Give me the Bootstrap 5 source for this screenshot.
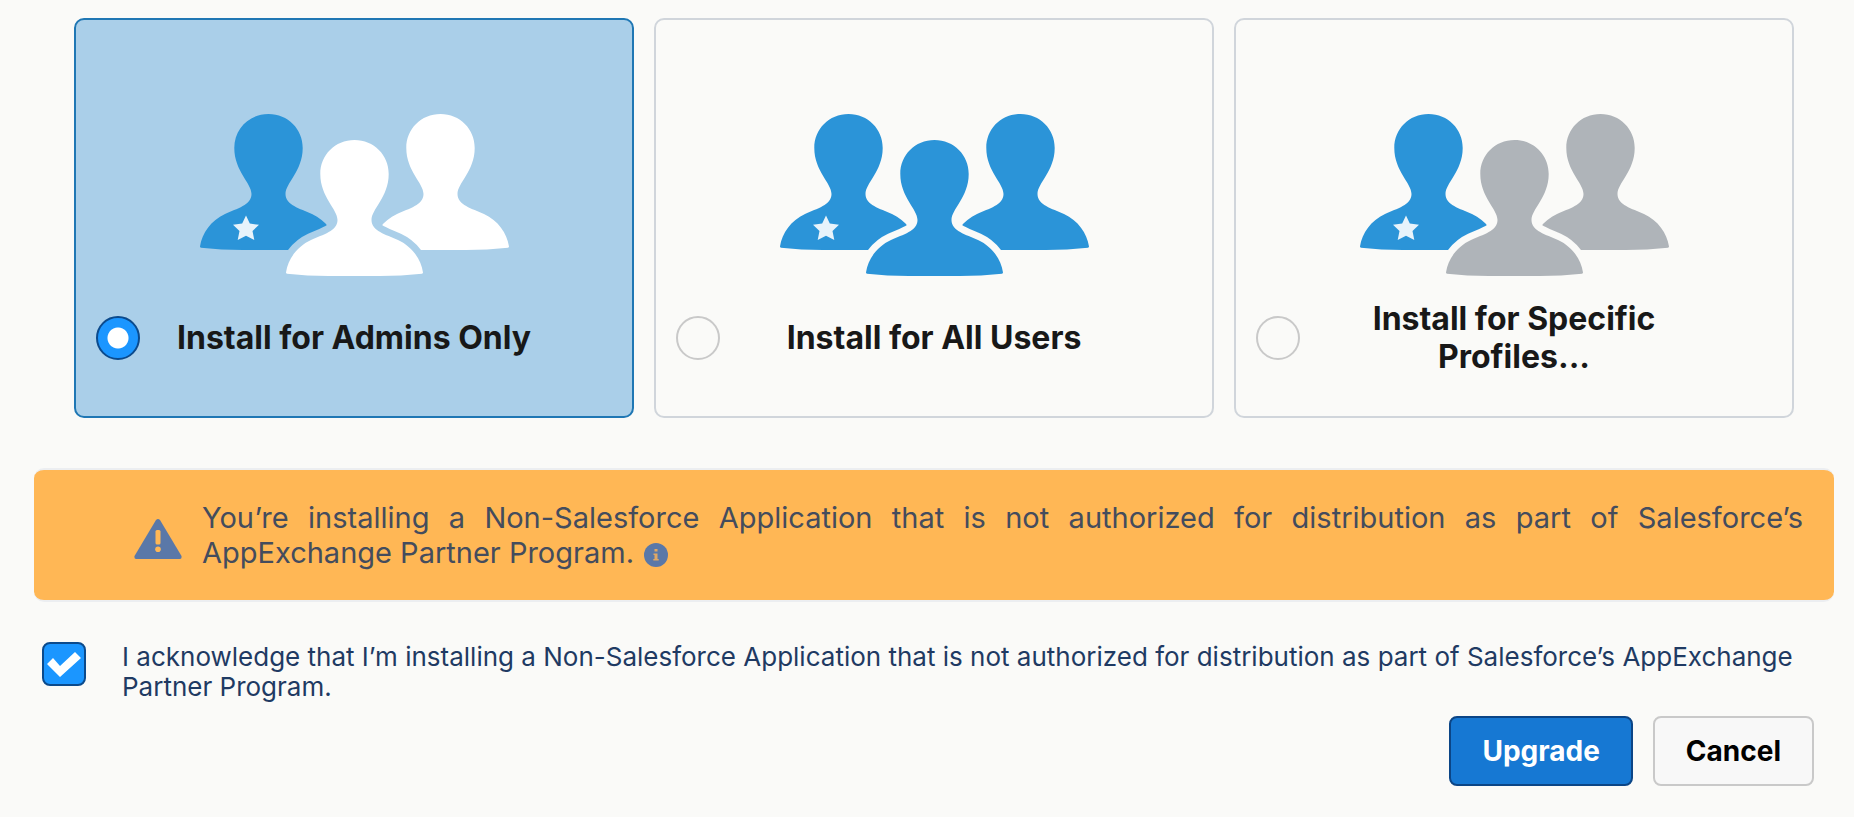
<!DOCTYPE html>
<html lang="en">
<head>
<meta charset="utf-8">
<meta name="viewport" content="width=device-width, initial-scale=1">
<title>Upgrade package</title>
<link href="https://cdn.jsdelivr.net/npm/bootstrap@5.3.0/dist/css/bootstrap.min.css" rel="stylesheet">
<style>
  body { background: #fafaf8; font-family: Inter, "Liberation Sans", sans-serif; color: #181818; }
  .install-page { padding: 18px 20px 30px 34px; }
  .install-options { display: grid; grid-template-columns: repeat(3, 1fr); gap: 20px; margin: 0 40px 50px; }
  .option-card { border: 2px solid #d0d5db; border-radius: 10px; min-height: 400px; padding: 94px 20px 38px; cursor: pointer; }
  .option-card:has(input:checked) { background: #aacfe9; border-color: #1f77b4; }
  .option-art { width: 310px; max-width: 100%; }
  .option-row { min-height: 80px; margin-top: 22px; }
  .option-title { font-size: 32px; line-height: 38px; font-weight: 700; padding: 0 20px; margin-right: 44px; }
  .form-check-input.pick { width: 44px; height: 44px; margin: 0; border: 2px solid #c9c9c9; background-color: #fafaf8; flex: none; box-shadow: none; }
  .form-check-input.pick:checked { background-color: #1b96ff; border-color: #0b4a8c; }
  .form-check-input.pick[type=radio]:checked { background-image: radial-gradient(circle, #fff 10px, transparent 11px); background-size: 100% 100%; }
  .form-check-input.pick[type=checkbox] { border-radius: 8px; }
  .form-check-input.pick[type=checkbox]:checked { background-size: 100% 100%; background-image: url("data:image/svg+xml,%3Csvg xmlns='http://www.w3.org/2000/svg' viewBox='0 0 40 40'%3E%3Cpath d='M3 20L9 14 16 22 31 8 37 14 16 33Z' fill='%23fff'/%3E%3C/svg%3E"); }
  .warning-banner { background: #ffb755; border: 2px solid #eceef1; border-width: 2px 0; border-radius: 10px; padding: 30px 31px 30px 100px; gap: 20px; color: #444c5d; }
  .warning-text { font-size: 29px; line-height: 35px; text-align: justify; }
  .info-btn { line-height: 0; margin-left: 2px; vertical-align: -4px; }
  .info-btn svg { display: block; }
  .ack-row { padding: 40px 20px 0 8px; gap: 36px; }
  .ack-text { font-size: 26px; line-height: 30px; color: #1f3a63; }
  .action-row { gap: 20px; margin: 14px 20px 0 0; }
  .action-btn { font-size: 28px; line-height: 34px; font-weight: 700; border-width: 2px; border-radius: 8px; padding: 16px 31px; }
  .btn-upgrade, .btn-upgrade:hover { background: #1678d3; border-color: #0b4586; color: #fff; }
  .btn-cancel, .btn-cancel:hover { background: #f8f8f8; border-color: #c9c9c9; color: #000; }
</style>
</head>
<body>
<svg width="0" height="0" class="position-absolute" aria-hidden="true">
  <defs>
    <path id="person" d="M69.5 0C89 0 103.700 15 103.700 34C103.700 57 86.500 69 86.500 80C86.500 91 101 94.500 113 100C127 106.500 136 119 138 132.500Q138 133.500 137 133.700Q116 136 95 136H44Q22 136 2 133.700Q1 133.500 1 132.500C3 119 12 106.500 26 100C38 94.500 52.500 91 52.500 80C52.500 69 35.300 57 35.300 34C35.300 15 50 0 69.500 0Z"/>
    <mask id="front-gap" maskUnits="userSpaceOnUse" x="0" y="0" width="310" height="162">
      <rect width="310" height="162" fill="#fff"/>
      <use href="#person" x="86" y="26" fill="#000" stroke="#000" stroke-width="14"/>
    </mask>
    <g id="admin" mask="url(#front-gap)">
      <use href="#person" fill="#2b94d8"/>
      <path d="M47 101.500L50.800 109.600 60 110.800 53.500 117 55.300 126 47 121.800 38.700 126 40.500 117 34 110.800 43.200 109.600Z" fill="#e8f3fb"/>
    </g>
    <g id="others">
      <g mask="url(#front-gap)"><use href="#person" x="172"/></g>
      <use href="#person" x="86" y="26"/>
    </g>
  </defs>
</svg>

<main class="install-page">
  <form>
    <div class="install-options">
      <label class="option-card d-flex flex-column" for="opt-admins">
        <svg class="option-art align-self-center" viewBox="0 0 310 162" aria-hidden="true"><use href="#admin"/><use href="#others" fill="#fff"/></svg>
        <span class="option-row d-flex align-items-center">
          <input class="form-check-input pick" type="radio" name="audience" id="opt-admins" checked>
          <span class="option-title flex-grow-1 text-center">Install for Admins Only</span>
        </span>
      </label>
      <label class="option-card d-flex flex-column" for="opt-all">
        <svg class="option-art align-self-center" viewBox="0 0 310 162" aria-hidden="true"><use href="#admin"/><use href="#others" fill="#2b94d8"/></svg>
        <span class="option-row d-flex align-items-center">
          <input class="form-check-input pick" type="radio" name="audience" id="opt-all">
          <span class="option-title flex-grow-1 text-center">Install for All Users</span>
        </span>
      </label>
      <label class="option-card d-flex flex-column" for="opt-specific">
        <svg class="option-art align-self-center" viewBox="0 0 310 162" aria-hidden="true"><use href="#admin"/><use href="#others" fill="#afb4b9"/></svg>
        <span class="option-row d-flex align-items-center">
          <input class="form-check-input pick" type="radio" name="audience" id="opt-specific">
          <span class="option-title flex-grow-1 text-center">Install for Specific Profiles...</span>
        </span>
      </label>
    </div>

    <div class="warning-banner d-flex align-items-center" role="alert">
      <svg class="flex-shrink-0 mt-2" width="48" height="40" viewBox="0 0 48 40" aria-hidden="true">
        <path d="M22 1Q24 -1 26 1L47.500 37Q48 40 46 40H2Q0 40 .5 37Z" fill="#5a78a8"/>
        <rect x="21.500" y="11" width="5" height="14.500" rx="1.500" fill="#ffb755"/><circle cx="24" cy="30.300" r="2.800" fill="#ffb755"/>
      </svg>
      <div class="warning-text">You’re installing a Non-Salesforce Application that is not authorized for distribution as part of Salesforce’s AppExchange Partner Program.
        <button type="button" class="info-btn btn p-0 border-0" aria-label="More information"><svg width="24" height="24" viewBox="0 0 24 24" aria-hidden="true"><circle cx="12" cy="12" r="12" fill="#5a78a8"/><path d="M10.500 6h3v2.600h-3zM9.500 10.500h4v5.500h1.200v1.600H9.300V16h1.200v-3.900h-1z" fill="#e0a865"/></svg></button>
      </div>
    </div>

    <div class="ack-row d-flex align-items-start">
      <input class="form-check-input pick" type="checkbox" id="ack" checked>
      <label class="ack-text" for="ack">I acknowledge that I’m installing a Non-Salesforce Application that is not authorized for distribution as part of Salesforce’s AppExchange Partner Program.</label>
    </div>

    <div class="action-row d-flex justify-content-end">
      <button type="button" class="btn action-btn btn-upgrade">Upgrade</button>
      <button type="button" class="btn action-btn btn-cancel">Cancel</button>
    </div>
  </form>
</main>
<script src="https://cdn.jsdelivr.net/npm/bootstrap@5.3.0/dist/js/bootstrap.bundle.min.js"></script>
</body>
</html>
